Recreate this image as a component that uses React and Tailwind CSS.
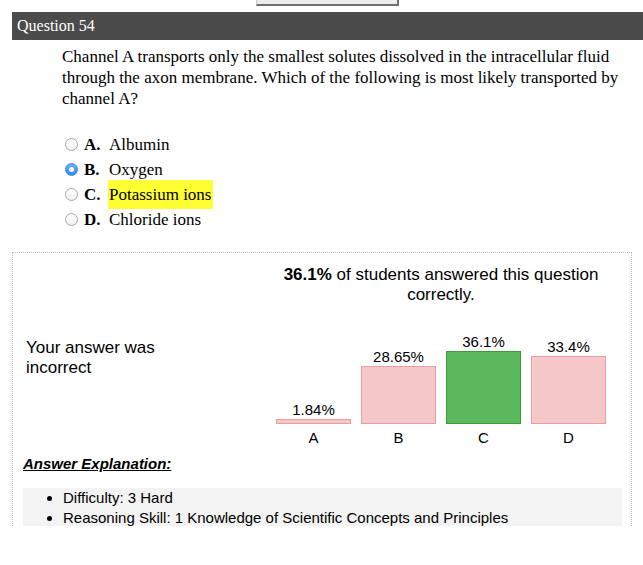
import React from 'react';

const options = [
  { key: 'A', text: 'Albumin' },
  { key: 'B', text: 'Oxygen', selected: true },
  { key: 'C', text: 'Potassium ions', correct: true },
  { key: 'D', text: 'Chloride ions' },
];

const stats = [
  { key: 'A', label: '1.84%', h: 5 },
  { key: 'B', label: '28.65%', h: 58 },
  { key: 'C', label: '36.1%', h: 73, correct: true },
  { key: 'D', label: '33.4%', h: 68 },
];

function Radio({ checked }) {
  if (checked) {
    return (
      <span className="inline-flex items-center justify-center w-[13px] h-[13px] rounded-full bg-gradient-to-b from-[#6cb4f8] to-[#2f88ee] border border-[#3a8be0]">
        <span className="w-[5px] h-[5px] rounded-full bg-white" />
      </span>
    );
  }
  return (
    <span className="inline-block w-[13px] h-[13px] rounded-full border border-[#a9a9a9] bg-gradient-to-b from-white to-[#f0f0f0]" />
  );
}

export default function App() {
  return (
    <div className="h-[565px] bg-white font-['Liberation_Serif',serif] text-black">
      {/* leftover button edge at top */}
      <div className="ml-[256px] w-[143px] h-[6px] bg-[#ececec] border-x border-b-2 border-l-[#cfcfcf] border-r-2 border-r-[#6f6f6f] border-b-[#6f6f6f]" />

      <div className="ml-[12px] mt-[6px] h-[28px] bg-[#4b4b4b] text-white text-[16px] leading-[28px] pl-[5px]">
        Question 54
      </div>

      <p className="ml-[62px] mr-[20px] mt-[6px] text-[17px] leading-[21px]">
        Channel A transports only the smallest solutes dissolved in the intracellular fluid through the axon membrane. Which of the following is most likely transported by channel A?
      </p>

      <div className="ml-[65px] mt-[23px] flex flex-col">
        {options.map((o) => (
          <div key={o.key} className="flex items-center h-[25px] text-[17px]">
            <Radio checked={o.selected} />
            <span className="font-bold ml-[6px] w-[25px]">{o.key}.</span>
            <span className={o.correct ? 'bg-[#ffff33] py-[2px] px-[1px] -ml-[1px]' : ''}>{o.text}</span>
          </div>
        ))}
      </div>

      <div className="ml-[12px] mt-[20px] w-[620px] h-[274px] overflow-hidden border border-b-0 border-dotted border-[#bdbdbd] font-['Liberation_Sans',Arial,sans-serif]">
        <div className="flex">
          <div className="w-[253px] pl-[13px] pt-[85px] text-[17px] leading-[20px]">
            Your answer was
            <br />
            incorrect
          </div>
          <div className="w-[350px] pt-[12px]">
            <p className="text-center text-[17px] leading-[20px] px-[8px]">
              <b>36.1%</b> of students answered this question correctly.
            </p>
            <div className="mt-[29px] flex justify-center items-end gap-[10px]">
              {stats.map((s) => (
                <div key={s.key} className="w-[75px] flex flex-col items-center">
                  <div className="text-[15px] leading-[16px] mb-[1px]">{s.label}</div>
                  <div
                    className={
                      s.correct
                        ? 'w-full bg-[#5cb85c] border border-[#3d9a3d]'
                        : 'w-full bg-[#f4c8c9] border border-[#eb9e9f]'
                    }
                    style={{ height: s.h }}
                  />
                </div>
              ))}
            </div>
            <div className="mt-[6px] flex justify-center gap-[10px]">
              {stats.map((s) => (
                <div key={s.key} className="w-[75px] text-center text-[15px] leading-[16px]">
                  {s.key}
                </div>
              ))}
            </div>
          </div>
        </div>

        <div className="pl-[10px] pr-[9px]">
          <div className="mt-[9px] text-[15px] leading-[18px] font-bold italic underline">
            Answer Explanation:
          </div>
          <ul className="mt-[15px] bg-[#f3f3f3] list-disc pl-[40px] text-[15px] leading-[20px]">
            <li>Difficulty: 3 Hard</li>
            <li>Reasoning Skill: 1 Knowledge of Scientific Concepts and Principles</li>
          </ul>
        </div>
      </div>
    </div>
  );
}
